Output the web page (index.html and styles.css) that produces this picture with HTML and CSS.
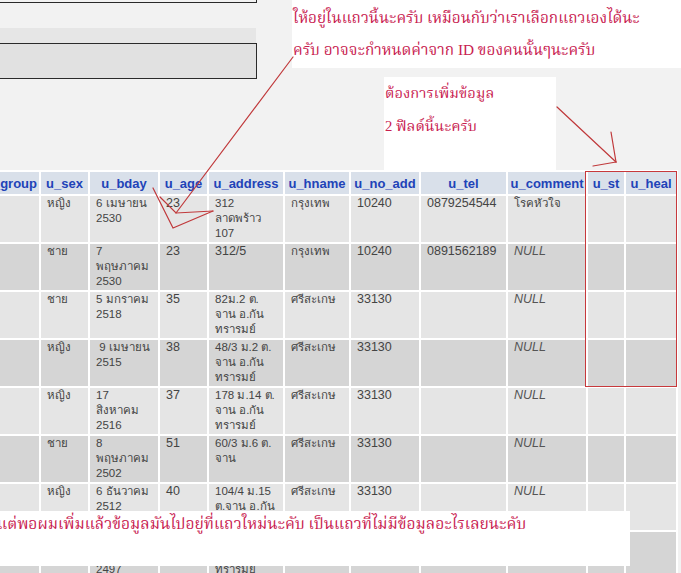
FILE: index.html
```html
<!DOCTYPE html>
<html lang="th">
<head>
<meta charset="utf-8">
<title>phpMyAdmin - members</title>
<link rel="stylesheet" href="styles.css">
</head>
<body>
<div class="page">
  <div class="topbox"></div>
  <div class="band"></div>
  <div class="querybox"></div>
  <table class="grid">
    <thead>
      <tr>
        <th class="c1">u_group</th>
        <th class="c2">u_sex</th>
        <th class="c3">u_bday</th>
        <th class="c4">u_age</th>
        <th class="c5">u_address</th>
        <th class="c6">u_hname</th>
        <th class="c7">u_no_add</th>
        <th class="c8">u_tel</th>
        <th class="c9">u_comment</th>
        <th class="c10">u_st</th>
        <th class="c11">u_heal</th>
      </tr>
    </thead>
    <tbody>
      <tr class="odd">
        <td></td><td class="th">หญิง</td><td class="th">6 เมษายน<br>2530</td><td>23</td><td class="th">312<br>ลาดพร้าว<br>107</td><td class="th">กรุงเทพ</td><td>10240</td><td>0879254544</td><td class="th">โรคหัวใจ</td><td></td><td></td>
      </tr>
      <tr class="even">
        <td></td><td class="th">ชาย</td><td class="th">7<br>พฤษภาคม<br>2530</td><td>23</td><td>312/5</td><td class="th">กรุงเทพ</td><td>10240</td><td>0891562189</td><td class="null">NULL</td><td></td><td></td>
      </tr>
      <tr class="odd">
        <td></td><td class="th">ชาย</td><td class="th">5 มกราคม<br>2518</td><td>35</td><td class="th">82ม.2 ต.<br>จาน อ.กัน<br>ทรารมย์</td><td class="th">ศรีสะเกษ</td><td>33130</td><td></td><td class="null">NULL</td><td></td><td></td>
      </tr>
      <tr class="even">
        <td></td><td class="th">หญิง</td><td class="th">&nbsp;9 เมษายน<br>2515</td><td>38</td><td class="th">48/3 ม.2 ต.<br>จาน อ.กัน<br>ทรารมย์</td><td class="th">ศรีสะเกษ</td><td>33130</td><td></td><td class="null">NULL</td><td></td><td></td>
      </tr>
      <tr class="odd">
        <td></td><td class="th">หญิง</td><td class="th">17<br>สิงหาคม<br>2516</td><td>37</td><td class="th">178 ม.14 ต.<br>จาน อ.กัน<br>ทรารมย์</td><td class="th">ศรีสะเกษ</td><td>33130</td><td></td><td class="null">NULL</td><td></td><td></td>
      </tr>
      <tr class="even">
        <td></td><td class="th">ชาย</td><td class="th">8<br>พฤษภาคม<br>2502</td><td>51</td><td class="th">60/3 ม.6 ต.<br>จาน</td><td class="th">ศรีสะเกษ</td><td>33130</td><td></td><td class="null">NULL</td><td></td><td></td>
      </tr>
      <tr class="odd">
        <td></td><td class="th">หญิง</td><td class="th">6 ธันวาคม<br>2512</td><td>40</td><td class="th">104/4 ม.15<br>ต.จาน อ.กัน<br>ทรารมย์</td><td class="th">ศรีสะเกษ</td><td>33130</td><td></td><td class="null">NULL</td><td></td><td></td>
      </tr>
      <tr class="even">
        <td></td><td class="th">ชาย</td><td class="th">2<br>มีนาคม<br>2497</td><td>56</td><td class="th">15 ม.3 ต.<br>จาน อ.กัน<br>ทรารมย์</td><td class="th">ศรีสะเกษ</td><td>33130</td><td></td><td class="null">NULL</td><td></td><td></td>
      </tr>
    </tbody>
  </table>
</div>

<div class="note note-top">
  <p>ให้อยู่ในแถวนี้นะครับ เหมือนกับว่าเราเลือกแถวเองได้นะ</p>
  <p>ครับ อาจจะกำหนดค่าจาก ID ของคนนั้นๆนะครับ</p>
</div>
<div class="note note-mid">
  <p>ต้องการเพิ่มข้อมูล</p>
  <p>2 ฟิลด์นี้นะครับ</p>
</div>
<div class="note note-bottom">
  <p>แต่พอผมเพิ่มแล้วข้อมูลมันไปอยู่ที่แถวใหม่นะคับ เป็นแถวที่ไม่มีข้อมูลอะไรเลยนะคับ</p>
</div>
<div class="redbox"></div>

<svg class="arrows" width="681" height="573" viewBox="0 0 681 573" xmlns="http://www.w3.org/2000/svg">
  <g fill="none" stroke="#c0393b" stroke-width="1.2" stroke-linecap="round">
    <line x1="293" y1="57" x2="176" y2="213"/>
    <polyline points="153,188 173,228 213,211"/>
    <polyline points="160,197 176,213 213,211"/>
    <line x1="557" y1="107" x2="616" y2="162"/>
    <line x1="611" y1="132" x2="616" y2="162"/>
    <line x1="593" y1="166" x2="616" y2="162"/>
  </g>
</svg>
</body>
</html>
```
FILE: styles.css
```css
html, body {
  margin: 0;
  padding: 0;
  height: 573px;
  overflow: hidden;
  background: #f2f2f2;
}

body {
  position: relative;
  font-family: "Liberation Sans", Arial, sans-serif;
}

.topbox {
  margin: -10px 0 0 -2px;
  width: 257px;
  height: 11px;
  border: 1px solid #2a2a2a;
}

.band {
  margin-top: 25px;
  width: 256px;
  height: 15px;
  background: #e6e6e6;
}

.querybox {
  margin-left: -2px;
  width: 257px;
  height: 34px;
  border: 1px solid #2a2a2a;
  background: #e1e1e1;
}

.grid {
  margin: 91px 0 0 -19px;
  width: 697px;
  table-layout: fixed;
  border-collapse: separate;
  border-spacing: 2px;
  background: #ffffff;
  font-size: 12.5px;
  color: #444;
}

.grid th,
.grid td {
  box-sizing: border-box;
  white-space: nowrap;
  overflow: hidden;
}

.grid th {
  height: 22px;
  padding: 0;
  background: #d9e0ea;
  color: #2143b8;
  font-size: 13px;
  font-weight: bold;
  text-align: center;
  vertical-align: middle;
}

.grid td {
  height: 46px;
  padding: 0 4px 0 6px;
  line-height: 15px;
  vertical-align: top;
  text-align: left;
}

.grid td.th {
  font-size: 11.5px;
}

.grid td.null {
  font-style: italic;
  color: #555;
}

.grid tr.odd td { background: #e5e5e5; }
.grid tr.even td { background: #d5d5d5; }

.c1 { width: 56px; }
.c2 { width: 47px; }
.c3 { width: 68px; }
.c4 { width: 47px; }
.c5 { width: 74px; }
.c6 { width: 64px; }
.c7 { width: 68px; }
.c8 { width: 85px; }
.c9 { width: 78px; }
.c10 { width: 36px; }
.c11 { width: 50px; }

.note {
  position: absolute;
  background: #ffffff;
  color: #c8204f;
  font-family: "Liberation Serif", "Noto Serif Thai", "Norasi", "Kinnari", "Tlwg Typist", "Times New Roman", serif;
}

.note p {
  margin: 0;
  white-space: nowrap;
}

.note-top {
  left: 292px;
  top: 0;
  width: 389px;
  height: 68px;
  font-size: 15.3px;
  line-height: 32px;
  padding: 2px 0 0 1px;
  box-sizing: border-box;
}

.note-mid {
  left: 384px;
  top: 77px;
  width: 172px;
  height: 93px;
  font-size: 14.7px;
  line-height: 33px;
  padding: 0 0 0 1px;
  box-sizing: border-box;
}

.note-bottom {
  left: 0;
  top: 511px;
  width: 630px;
  height: 55px;
  font-size: 15.6px;
  line-height: 26px;
  padding-left: 0;
  text-indent: -3px;
}

.redbox {
  position: absolute;
  left: 585px;
  top: 171px;
  width: 90px;
  height: 214px;
  border: 1.5px solid #c7393c;
}

.arrows {
  position: absolute;
  left: 0;
  top: 0;
  pointer-events: none;
}
```
